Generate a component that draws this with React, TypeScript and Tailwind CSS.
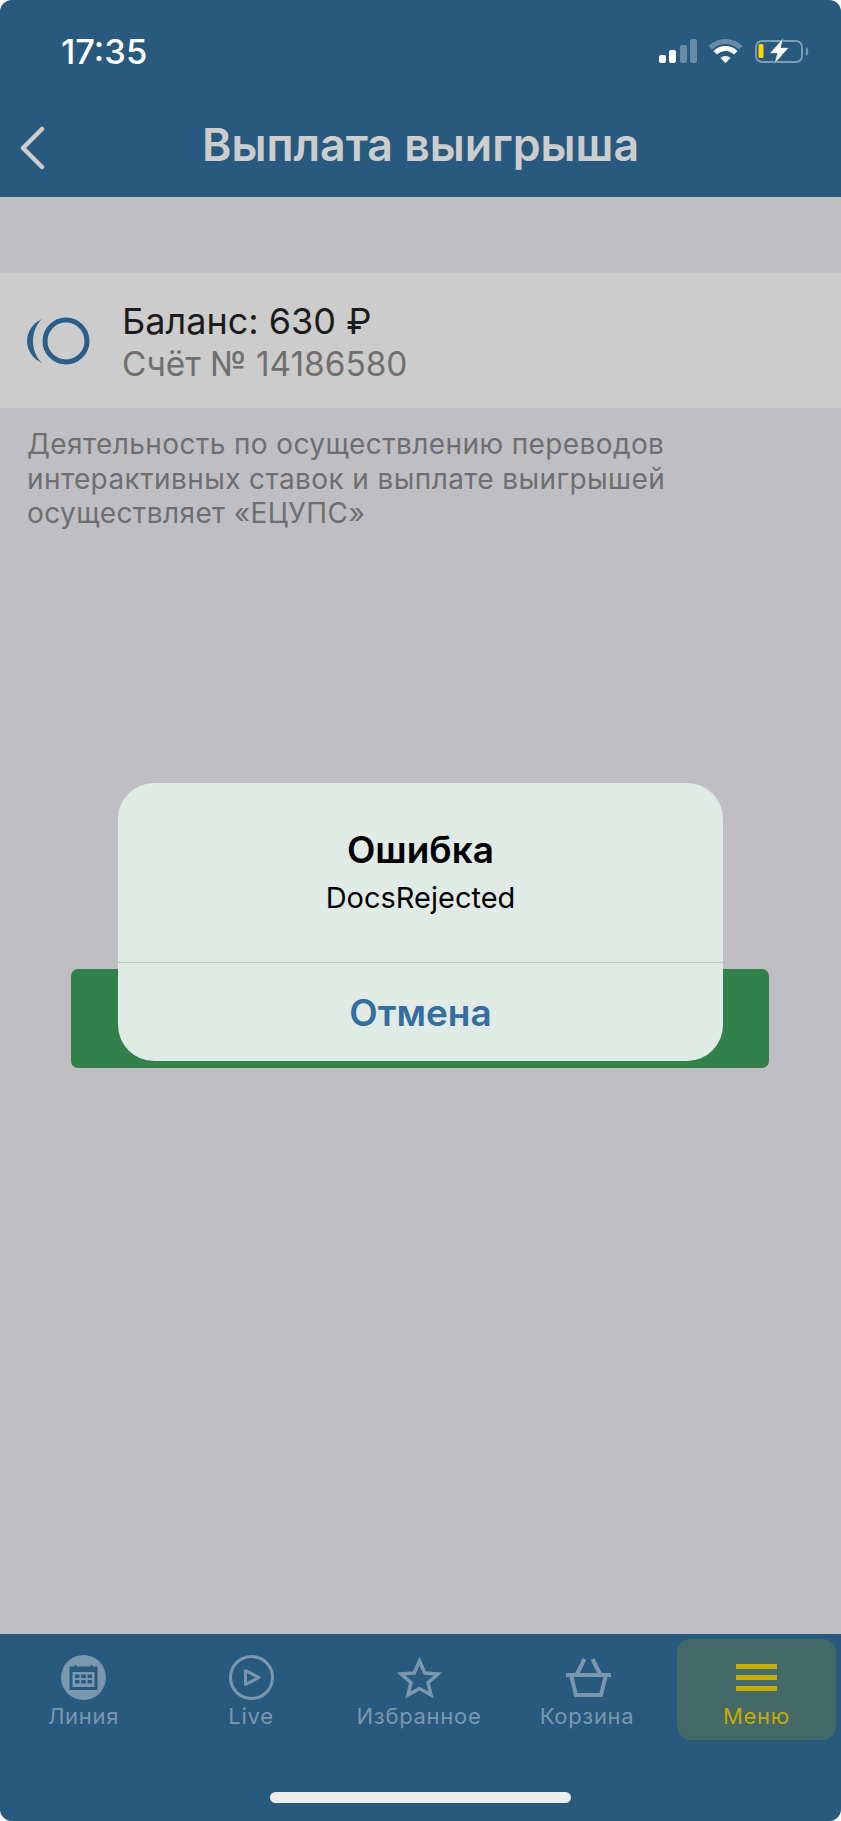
const sans = "font-['Inter','Liberation_Sans',sans-serif]";

function StatusIcons() {
  return (
    <svg width="152" height="28" viewBox="0 0 152 28" className="block">
      <rect x="2" y="17" width="7" height="8" rx="2" fill="#fff" />
      <rect x="12" y="12" width="7" height="13" rx="2" fill="#fff" />
      <rect x="23" y="7" width="7" height="18" rx="2" fill="#fff" fillOpacity="0.3" />
      <rect x="33" y="1" width="7" height="24" rx="2" fill="#fff" fillOpacity="0.3" />
      <path d="M53.300 9.800 A21.500 21.500 0 0 1 83.700 9.800" fill="none" stroke="#fff" strokeOpacity="0.3" strokeWidth="5" />
      <path d="M58.250 14.750 A14.500 14.500 0 0 1 78.750 14.750" fill="none" stroke="#fff" strokeWidth="5" />
      <path d="M68.500 25 L63.500 20 A7 7 0 0 1 73.500 20 Z" fill="#fff" />
      <rect x="99" y="3" width="46" height="21" rx="6" fill="none" stroke="#fff" strokeOpacity="0.4" strokeWidth="2" />
      <rect x="101.500" y="6" width="5" height="14" rx="1.500" fill="#ffd60a" />
      <path d="M149 9 C152 10 152 17 149 18 Z" fill="#fff" fillOpacity="0.4" />
      <path d="M126.500 -0.500 L112.500 15.500 L120 15.500 L117 26.500 L132 9.500 L124 9.500 Z" fill="#fff" stroke="#285a80" strokeWidth="0.700" />
    </svg>
  );
}

function Logo() {
  return (
    <svg width="64" height="50" viewBox="0 0 64 50" className="block shrink-0">
      <circle cx="39" cy="25" r="21" fill="none" stroke="#2a5f8a" strokeWidth="5" />
      <path d="M15 3 C-5 12 -5 38 15 47 C3 36 3 14 15 3 Z" fill="#2a5f8a" />
    </svg>
  );
}

function CalendarIcon() {
  return (
    <svg width="45" height="45" viewBox="0 0 45 45" className="block">
      <circle cx="22.500" cy="22.500" r="22.500" fill="#7b97ae" />
      <path d="M8.500 11.500h5V10h2v1.500h14V10h2v1.500h5V35H8.500z" fill="#285a80" />
      <rect x="11.500" y="17" width="22" height="15" fill="#7b97ae" />
      <path d="M14 19.500h4.500v3.500H14zM20.300 19.500h4.500v3.500h-4.500zM26.500 19.500H31v3.500h-4.500zM14 25h4.500v3.500H14zM20.300 25h4.500v3.500h-4.500zM26.500 25H31v3.500h-4.500z" fill="#285a80" />
    </svg>
  );
}

function PlayIcon() {
  return (
    <svg width="45" height="45" viewBox="0 0 45 45" className="block">
      <circle cx="22.500" cy="22.500" r="21" fill="none" stroke="#7b97ae" strokeWidth="3" />
      <path d="M16.500 15.500 L30 22.500 L16.500 29.500 Z" fill="none" stroke="#7b97ae" strokeWidth="3" strokeLinejoin="round" />
    </svg>
  );
}

function StarIcon() {
  return (
    <svg width="45" height="45" viewBox="0 0 45 45" className="block">
      <path d="M22.500 6 L27.800 18 L41 19 L31 27.700 L34 40 L22.500 33.500 L11 40 L14 27.700 L4 19 L17.200 18 Z" fill="none" stroke="#7b97ae" strokeWidth="3.500" />
    </svg>
  );
}

function BasketIcon() {
  return (
    <svg width="48" height="45" viewBox="0 0 48 45" className="block">
      <path d="M3 18h45v4H3z" fill="#7b97ae" />
      <path d="M8.500 22 L13 40 H38 L42.500 22" fill="none" stroke="#7b97ae" strokeWidth="4" />
      <path d="M14 19 L21.500 4 M37 19 L29.500 4" fill="none" stroke="#7b97ae" strokeWidth="4" />
    </svg>
  );
}

function MenuIcon() {
  return (
    <div className="flex h-[45px] w-[41px] flex-col justify-center gap-[6px]">
      <div className="h-[5px] bg-[#c4ad05]" />
      <div className="h-[5px] bg-[#c4ad05]" />
      <div className="h-[5px] bg-[#c4ad05]" />
    </div>
  );
}

const TABS = [
  { label: "Линия", icon: <CalendarIcon /> },
  { label: "Live", icon: <PlayIcon /> },
  { label: "Избранное", icon: <StarIcon /> },
  { label: "Корзина", icon: <BasketIcon /> },
];

export default function App() {
  return (
    <div className={`relative flex h-[1821px] w-[841px] flex-col overflow-hidden rounded-[12px] bg-[#bfbec3] ${sans}`}>
      <header className="h-[197px] shrink-0 bg-[#285a80]">
        <div className="flex h-[100px] items-start justify-between pt-[34px] pl-[61px] pr-[32px]">
          <span className="text-[34.500px] leading-[36px] font-medium text-white">17:35</span>
          <div className="pt-[4px]">
            <StatusIcons />
          </div>
        </div>
        <div className="relative flex h-[97px] items-start justify-center">
          <svg width="28" height="44" viewBox="0 0 28 44" className="absolute top-[26px] left-[18px]">
            <path d="M24 3 L5 22 L24 41" fill="none" stroke="#cdcdcd" strokeWidth="4.500" strokeLinecap="round" strokeLinejoin="round" />
          </svg>
          <h1 className="pt-[21px] text-[44.700px] leading-[48px] font-semibold text-[#cdcdcd]">Выплата выигрыша</h1>
        </div>
      </header>

      <main className="flex-1">
        <section className="mt-[76px] flex h-[135px] items-center bg-[#cccccc] pl-[27px]">
          <Logo />
          <div className="ml-[31px] pt-[2px]">
            <p className="text-[36px] leading-[44px] text-[#1c1c1c]">Баланс: 630 ₽</p>
            <p className="text-[33.400px] leading-[42px] text-[#6f6f6f]">Счёт № 14186580</p>
          </div>
        </section>
        <p className="mt-[19px] w-[700px] pl-[27px] text-[28px] leading-[34.500px] tracking-[0.4px] text-[#6e6e70]">
          Деятельность по осуществлению переводов интерактивных ставок и выплате выигрышей осуществляет «ЕЦУПС»
        </p>
        <button className="mt-[438px] ml-[71px] block h-[99px] w-[698px] rounded-[7px] bg-[#32804a]" />
      </main>

      <nav className="relative grid h-[187px] shrink-0 grid-cols-[167px_repeat(4,168px)] bg-[#285a80] pt-[5px]">
        {TABS.map((tab) => (
          <div key={tab.label} className="flex flex-col items-center pt-[16px]">
            {tab.icon}
            <span className="mt-[3px] text-[22px] leading-[26px] tracking-[0.7px] text-[#7b97ae]">{tab.label}</span>
          </div>
        ))}
        <div className="mr-[3px] ml-auto flex h-[101px] w-[159px] flex-col items-center rounded-[14px] bg-[#456868] pt-[16px]">
          <MenuIcon />
          <span className="mt-[3px] text-[22px] leading-[26px] tracking-[0.7px] text-[#c4ad05]">Меню</span>
        </div>
        <div className="absolute bottom-[18px] left-[270px] h-[11px] w-[301px] rounded-full bg-[#ededed]" />
      </nav>

      <div className="absolute top-[783px] left-[118px] w-[605px] rounded-[36px] bg-[#e1ebe5]">
        <div className="flex h-[180px] flex-col items-center border-b border-[#b9c8bf] pt-[45px]">
          <p className="text-[37px] leading-[44px] font-semibold text-black">Ошибка</p>
          <p className="mt-[8px] text-[29px] leading-[36px] text-black">DocsRejected</p>
        </div>
        <div className="flex h-[98px] items-center justify-center pt-[2px]">
          <span className="text-[37px] leading-[44px] font-semibold text-[#336e9f]">Отмена</span>
        </div>
      </div>
    </div>
  );
}
